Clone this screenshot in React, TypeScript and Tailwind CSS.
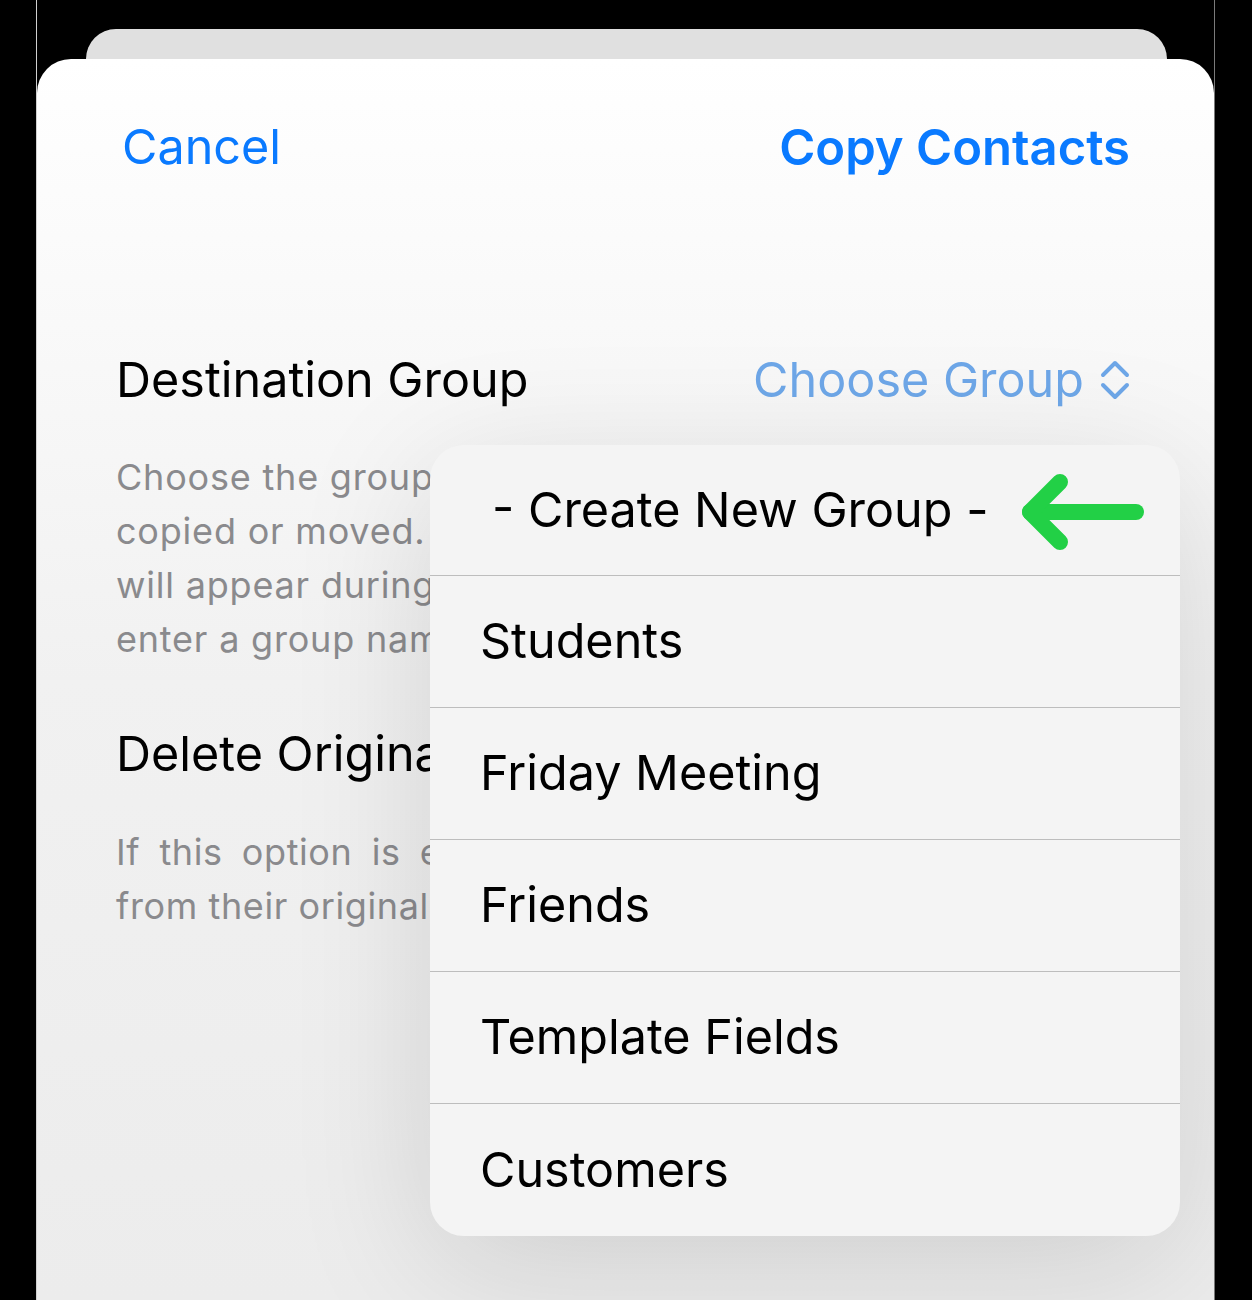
const groups = ["Students", "Friday Meeting", "Friends", "Template Fields", "Customers"]

function BackArrow() {
  return (
    <svg width="128" height="80" viewBox="0 0 128 80" fill="none" stroke="#22d046" strokeWidth="16" strokeLinecap="round" strokeLinejoin="round">
      <path d="M118 38H12" />
      <path d="M42 8L12 38L42 68" />
    </svg>
  )
}

function UpDownChevron() {
  return (
    <svg width="30" height="44" viewBox="0 0 30 44" fill="none" stroke="currentColor" strokeWidth="4" strokeLinecap="round" strokeLinejoin="round">
      <path d="M3 17L15 5L27 17" />
      <path d="M3 27L15 39L27 27" />
    </svg>
  )
}

function GroupMenu() {
  return (
    <div className="absolute left-[393px] top-[386px] w-[750px] rounded-[34px] bg-[#f4f4f4] shadow-[0_30px_140px_rgba(0,0,0,0.13)] overflow-hidden">
      <div className="h-[131px] flex items-center pl-[62px] pr-[34px] border-b border-[#bdbdbd]">
        <span className="text-[48.5px] text-black">- Create New Group -</span>
        <div className="ml-auto pt-[8px]">
          <BackArrow />
        </div>
      </div>
      {groups.map((g, i) => (
        <div
          key={g}
          className={
            "h-[132px] flex items-center pl-[50px] text-[48.5px] text-black " +
            (i < groups.length - 1 ? "border-b border-[#bdbdbd]" : "")
          }
        >
          {g}
        </div>
      ))}
    </div>
  )
}

export default function App() {
  return (
    <div className="w-[1252px] h-[1300px] bg-black overflow-hidden font-['Inter','Liberation_Sans',sans-serif]">
      <div className="ml-[36px] w-[1179px] h-full border-l border-l-[#d0d0d0] border-r border-r-[#7a7a7a] flex flex-col pt-[29px]">
        {/* card peeking behind the sheet */}
        <div className="ml-[49px] mr-[47px] h-[32px] rounded-t-[30px] bg-[#e0e0e0] shrink-0" />
        <div className="relative -mt-[2px] flex-1 rounded-t-[34px] bg-gradient-to-b from-[#ffffff] via-[#f1f1f1] to-[#ececec]">
          <div className="flex items-center justify-between pl-[85px] pr-[84px] pt-[52px]">
            <span className="text-[48.5px] text-[#0a7aff]">Cancel</span>
            <span className="text-[49px] font-semibold text-[#0a7aff]">Copy Contacts</span>
          </div>

          <div className="pl-[79px] pr-[84px] mt-[159px]">
            <div className="flex items-center justify-between">
              <span className="text-[48.5px] text-black">Destination Group</span>
              <div className="flex items-center gap-[16px] text-[#6ea7e8]">
                <span className="text-[48.5px]">Choose Group</span>
                <UpDownChevron />
              </div>
            </div>

            <div className="mt-[34px] text-[36px] leading-[54px] text-[#8a8a8d] tracking-[0.8px] whitespace-nowrap">
              <p>Choose the group where the selected contacts will be</p>
              <p>copied or moved. For a new group, a prompt</p>
              <p>will appear during the copy asking you to</p>
              <p>enter a group name.</p>
            </div>

            <div className="mt-[52px] text-[48.5px] text-black">Delete Original Contacts</div>

            <div className="mt-[34px] text-[36px] leading-[54px] text-[#8a8a8d] tracking-[0.6px]">
              <p className="text-justify [text-align-last:justify]">If this option is enabled, the contacts will be removed</p>
              <p>from their original group.</p>
            </div>
          </div>

          <GroupMenu />
        </div>
      </div>
    </div>
  )
}
